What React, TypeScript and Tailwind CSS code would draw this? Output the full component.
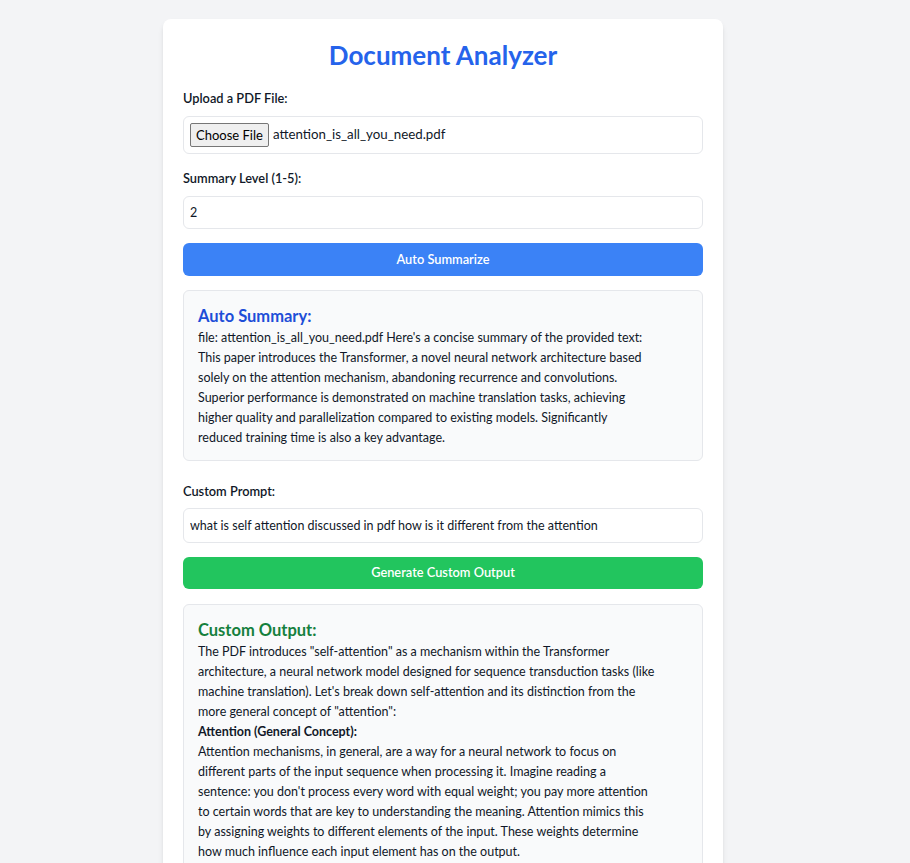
export default function App() {
  const summary =
    "file: attention_is_all_you_need.pdf Here's a concise summary of the provided text: This paper introduces the Transformer, a novel neural network architecture based solely on the attention mechanism, abandoning recurrence and convolutions. Superior performance is demonstrated on machine translation tasks, achieving higher quality and parallelization compared to existing models. Significantly reduced training time is also a key advantage.";

  return (
    <div className="min-h-screen bg-[#f3f4f6] pt-[19px] pr-6 pb-10 font-['Lato','Noto_Sans',sans-serif] text-gray-900">
      <div className="mx-auto w-[560px] rounded-lg bg-white p-5 shadow-md">
        <h1 className="mb-[17px] text-center text-[26px] leading-8 font-bold text-[#2563eb]">
          Document Analyzer
        </h1>

        <label className="mb-2 block text-[12.8px] leading-5 font-semibold">
          Upload a PDF File:
        </label>
        <div className="mb-3.5 flex h-[38px] items-center gap-1 rounded-md border border-gray-200 px-[6px]">
          <button className="h-6 rounded-[2px] border border-[#767676] bg-[#efefef] px-[5px] text-[13px] leading-none text-black">
            Choose File
          </button>
          <span className="text-[13.3px]">attention_is_all_you_need.pdf</span>
        </div>

        <label className="mt-px mb-2 block text-[12.8px] leading-5 font-semibold">
          Summary Level (1-5):
        </label>
        <input
          type="number"
          defaultValue={2}
          className="mb-3.5 block h-[33px] w-full rounded-md border border-gray-200 px-1.5 text-[12.5px]"
        />

        <button className="mb-3.5 h-[33px] w-full rounded-md bg-[#3b82f6] text-[12.8px] font-semibold text-white">
          Auto Summarize
        </button>

        <div className="rounded-md border border-gray-200 bg-[#f9fafb] px-3.5 pt-3.5 pb-3">
          <h2 className="text-[16.5px] leading-[23px] font-bold text-[#1d4ed8]">
            Auto Summary:
          </h2>
          <p className="pr-[36px] text-[12.5px] leading-5">{summary}</p>
        </div>

        <label className="mt-5 mb-[7px] block text-[12.8px] leading-5 font-semibold">
          Custom Prompt:
        </label>
        <input
          type="text"
          defaultValue="what is self attention discussed in pdf how is it different from the attention"
          className="mb-3.5 block h-[35px] w-full rounded-md border border-gray-200 px-1.5 text-[12.5px]"
        />

        <button className="mb-[15px] h-8 w-full rounded-md bg-[#22c55e] text-[12.8px] font-semibold text-white">
          Generate Custom Output
        </button>

        <div className="rounded-md border border-gray-200 bg-[#f9fafb] px-3.5 pt-3.5 pb-3">
          <h2 className="text-[16.5px] leading-[23px] font-bold text-[#15803d]">
            Custom Output:
          </h2>
          <div className="pr-[29px] text-[12.5px] leading-5">
            <p>
              The PDF introduces "self-attention" as a mechanism within the
              Transformer architecture, a neural network model designed for
              sequence transduction tasks (like machine translation). Let's
              break down self-attention and its distinction from the more
              general concept of "attention":
            </p>
            <p className="font-bold">Attention (General Concept):</p>
            <p>
              Attention mechanisms, in general, are a way for a neural network
              to focus on different parts of the input sequence when processing
              it. Imagine reading a sentence: you don't process every word with
              equal weight; you pay more attention to certain words that are key
              to understanding the meaning. Attention mimics this by assigning
              weights to different elements of the input. These weights
              determine how much influence each input element has on the output.
            </p>
            <p className="font-bold">Self-Attention:</p>
            <p>
              Self-attention is a specific type of attention where the sequence
              attends to itself. Each position in the sequence computes a
              weighted combination of all positions in the same sequence,
              allowing the model to capture relationships between words
              regardless of their distance.
            </p>
          </div>
        </div>
      </div>
    </div>
  );
}
